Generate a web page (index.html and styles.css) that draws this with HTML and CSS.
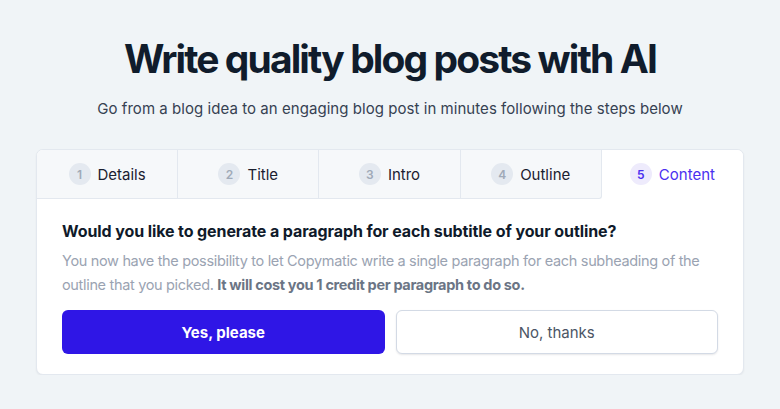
FILE: index.html
```html
<!DOCTYPE html>
<html>
<head>
<meta charset="utf-8">
<link rel="stylesheet" href="styles.css">
</head>
<body>
<main class="page">
  <h1 class="title">Write quality blog posts with AI</h1>
  <p class="subtitle">Go from a blog idea to an engaging blog post in minutes following the steps below</p>
  <section class="card">
    <nav class="tabs">
      <div class="tab"><span class="num">1</span><span class="label">Details</span></div>
      <div class="tab"><span class="num">2</span><span class="label">Title</span></div>
      <div class="tab"><span class="num">3</span><span class="label">Intro</span></div>
      <div class="tab"><span class="num">4</span><span class="label">Outline</span></div>
      <div class="tab active"><span class="num">5</span><span class="label">Content</span></div>
    </nav>
    <div class="body">
      <h2 class="question">Would you like to generate a paragraph for each subtitle of your outline?</h2>
      <p class="desc">You now have the possibility to let Copymatic write a single paragraph for each subheading of the outline that you picked. <strong>It will cost you 1 credit per paragraph to do so.</strong></p>
      <div class="actions">
        <button class="btn primary">Yes, please</button>
        <button class="btn secondary">No, thanks</button>
      </div>
    </div>
  </section>
</main>
</body>
</html>
```
FILE: styles.css
```css
* { box-sizing: border-box; }
html, body { margin: 0; padding: 0; }
body {
  background: #f0f4f7;
  font-family: Inter, "Noto Sans", sans-serif;
  color: #0f1a2a;
}
.page {
  width: 708px;
  margin: 0 auto;
  padding-top: 34px;
  display: flex;
  flex-direction: column;
  align-items: center;
}
.title {
  margin: 0;
  font-size: 39px;
  font-weight: 700;
  letter-spacing: -1.9px;
  line-height: 50px;
  color: #101c2c;
}
.subtitle {
  margin: 15px 0 0;
  font-size: 15px;
  line-height: 20px;
  color: #364152;
  letter-spacing: 0.05px;
}
.card {
  margin-top: 30px;
  width: 708px;
  background: #fff;
  border: 1px solid #e3e8ef;
  border-radius: 7px;
  box-shadow: 0 1px 2px rgba(15, 23, 42, 0.06);
  overflow: hidden;
}
.tabs {
  display: grid;
  grid-template-columns: repeat(5, 1fr);
  height: 49px;
}
.tab {
  display: flex;
  align-items: center;
  justify-content: center;
  gap: 7px;
  background: #f6f8fa;
  border-right: 1px solid #e3e8ef;
  border-bottom: 1px solid #e3e8ef;
  font-size: 15px;
  color: #1a2030;
}
.tab:nth-child(4) { border-bottom-right-radius: 3px; }
.tab.active {
  background: #fff;
  border-right: none;
  border-bottom-color: transparent;
  color: #4a2ff0;
}
.num {
  width: 22px;
  height: 22px;
  border-radius: 50%;
  background: #e4e9f0;
  color: #a0aab8;
  font-size: 12px;
  font-weight: 600;
  display: flex;
  align-items: center;
  justify-content: center;
}
.tab.active .num {
  background: #eeebfc;
  color: #4a2ff0;
}
.body {
  padding: 21px 25px 20px;
}
.question {
  margin: 0;
  font-size: 16px;
  font-weight: 700;
  letter-spacing: -0.1px;
  line-height: 22px;
  color: #0f1a2a;
}
.desc {
  margin: 7px 0 0;
  font-size: 14.5px;
  line-height: 24px;
  color: #9aa3b2;
  letter-spacing: -0.33px;
}
.desc strong {
  color: #6b7585;
  font-weight: 700;
}
.actions {
  margin-top: 13px;
  display: grid;
  grid-template-columns: 1fr 1fr;
  gap: 11px;
}
.btn {
  height: 44px;
  border-radius: 6px;
  font-family: inherit;
  font-size: 15px;
  cursor: pointer;
}
.btn.primary {
  background: #2f16e6;
  border: none;
  color: #fff;
  font-weight: 700;
}
.btn.secondary {
  background: #fff;
  border: 1px solid #d3dae5;
  box-shadow: 0 1px 2px rgba(15, 23, 42, 0.1);
  color: #4b5565;
}
```
